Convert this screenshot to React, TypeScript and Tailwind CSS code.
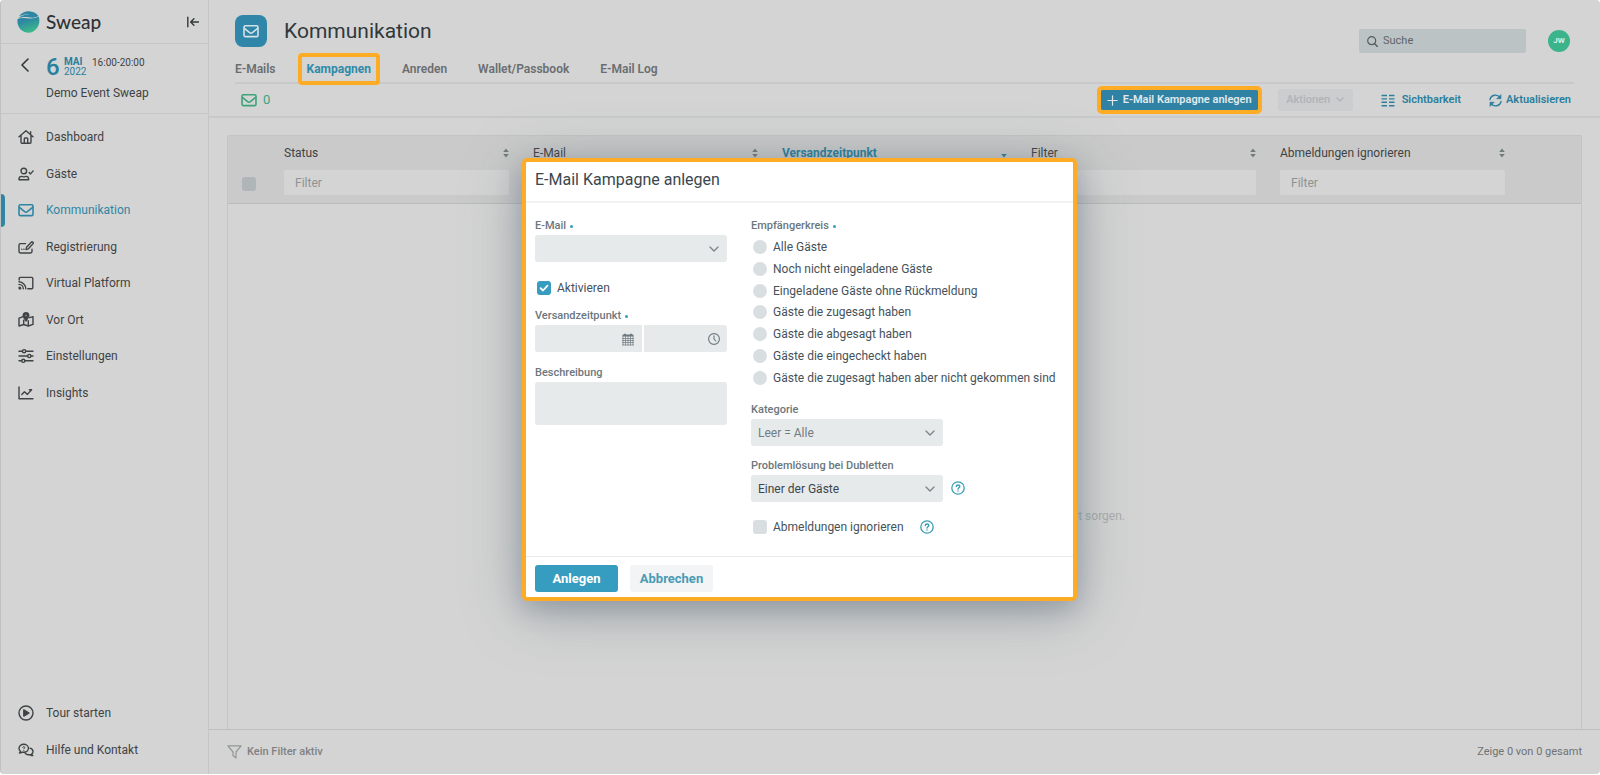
import type { ReactNode } from "react";

type IconProps = { className?: string };

function Svg({ className, children, width = 16, height = 16 }: IconProps & { children: ReactNode; width?: number; height?: number }) {
  return (
    <svg
      className={className}
      width={width}
      height={height}
      viewBox={`0 0 ${width} ${height}`}
      fill="none"
      stroke="currentColor"
      strokeWidth="1.4"
      strokeLinecap="round"
      strokeLinejoin="round"
      aria-hidden="true"
    >
      {children}
    </svg>
  );
}

function MailIcon({ className }: IconProps) {
  return (
    <Svg className={className}>
      <rect x="1" y="2.8" width="14" height="10.8" rx="1.4" strokeWidth="1.6" />
      <path d="M1.4 5.4 6.6 9.6a2.3 2.3 0 0 0 2.8 0l5.2-4.2" strokeWidth="1.6" />
    </Svg>
  );
}

function HomeIcon() {
  return (
    <Svg>
      <path d="M1 7.8 8 1.8l7 6M3 6.6v6.6a1 1 0 0 0 1 1h8a1 1 0 0 0 1-1V6.6" />
      <path d="M6.3 14V9.8c0-.5.3-.8.8-.8h1.8c.5 0 .8.3.8.8V14M12.6 5V2.6" />
    </Svg>
  );
}

function GuestIcon() {
  return (
    <Svg>
      <circle cx="5.8" cy="5" r="2.8" />
      <path d="M1 13.8v-1a2.6 2.6 0 0 1 2.6-2.4c.8 0 1.2.5 2.2.5s1.4-.5 2.2-.5a2.6 2.6 0 0 1 2.6 2.4v1zM11.2 6.6l1.3 1.3 2.7-3" />
    </Svg>
  );
}

function RegisterIcon() {
  return (
    <Svg>
      <path d="M7.6 4.6H2.4A1.4 1.4 0 0 0 1 6v6.6A1.4 1.4 0 0 0 2.4 14h10.2a1.4 1.4 0 0 0 1.4-1.4v-2.4" />
      <path d="m8 10.6.5-2.3 5-5.2c.8-.8 2.4.6 1.6 1.5l-4.9 5.3zM3.8 10.2h.1M5.9 10.2h.1" />
    </Svg>
  );
}

function CastIcon() {
  return (
    <Svg>
      <path d="M1.2 5V3.4c0-.6.4-1 1-1h11.6c.6 0 1 .4 1 1v9.4c0 .6-.4 1-1 1h-4" />
      <path d="M1 6.8a7 7 0 0 1 6.8 7M1 9.4a4.4 4.4 0 0 1 4.3 4.4" />
      <path d="M1.2 12.1c.8 0 1.5.8 1.5 1.6H1.2z" fill="currentColor" />
    </Svg>
  );
}

function MapIcon() {
  return (
    <Svg>
      <path d="M4.6 4.8 1 6.2V14l4.7-1.5 4.6 1.5 4.7-1.6V4.6l-3.4 1M5.7 8.2v4.3M10.3 8.6V14" />
      <path
        d="M8 .2a3.2 3.2 0 0 0-3.2 3.2C4.8 5.4 7 7.2 7.3 9.2h1.4C9 7.2 11.2 5.4 11.2 3.4A3.2 3.2 0 0 0 8 .2Zm0 2.3a.9.9 0 1 1 0 1.8.9.9 0 0 1 0-1.8Z"
        fill="currentColor"
        fillRule="evenodd"
        strokeWidth=".6"
      />
    </Svg>
  );
}

function SlidersIcon() {
  return (
    <Svg>
      <path d="M1 3.2h3.4M7.8 3.2H15M1 8h8.6M13 8h2M1 12.8h2.6M7 12.8h8" />
      <circle cx="6.1" cy="3.2" r="1.6" />
      <circle cx="11.3" cy="8" r="1.6" />
      <circle cx="5.3" cy="12.8" r="1.6" />
    </Svg>
  );
}

function ChartIcon() {
  return (
    <Svg>
      <path d="M1 2v11.8h14M3.8 9.6l2.6-2.8 3 2.6 4.2-4.6M11.4 4.8h2.2" />
    </Svg>
  );
}

function PlayIcon() {
  return (
    <Svg>
      <circle cx="8" cy="8" r="7" />
      <path d="M5.8 4.9v6.2L11 8z" fill="currentColor" />
    </Svg>
  );
}

function HelpChatIcon() {
  return (
    <Svg>
      <path d="M1.4 11c.6-.5.9-1.1 1-1.7A4.2 4.2 0 0 1 1 6.3C1 4 3.1 2.3 5.7 2.3s4.7 1.7 4.7 4-2.1 4-4.7 4c-.6 0-1.1-.1-1.6-.2-.8.6-1.7.9-2.7.9Z" />
      <path d="M12 6.1c1.8.4 3 1.7 3 3.3 0 1-.4 1.9-1.2 2.5.1.7.4 1.3 1 1.7-1.1 0-2-.4-2.7-1-2 .5-4-.1-5-1.5" />
      <path d="M4.7 5.4c.1-1.1 2-1.1 2 0 0 .7-.9.7-.9 1.4M5.8 8.3v.1" strokeWidth="1" />
    </Svg>
  );
}

function CollapseIcon() {
  return (
    <Svg width={12} height={12}>
      <path d="M.8 1.3v9.4M3.8 6h7.7M6.9 2.8 3.7 6l3.2 3.2" />
    </Svg>
  );
}

function ChevronDown({ className }: IconProps) {
  return (
    <Svg width={10} height={6} className={className}>
      <path d="m1 1 4 4 4-4" />
    </Svg>
  );
}

function HelpIcon() {
  return (
    <Svg width={14} height={14}>
      <circle cx="7" cy="7" r="6.2" strokeWidth="1.3" />
      <path d="M5.3 5.5C5.4 3.5 8.8 3.5 8.8 5.5 8.8 6.7 7 6.8 7 8M7 10v.1" strokeWidth="1.5" />
    </Svg>
  );
}

function CalendarIcon() {
  return (
    <Svg width={12} height={13} className="pointer-events-none absolute top-2 right-2 text-[#6b777d]">
      <path d="M.6 2.5h10.8M3 .7v1M9 .7v1" strokeWidth="1.8" strokeLinecap="butt" />
      <path d="M.5 5.5h11M.5 7.5h11M.5 9.5h11M.5 12h11M1 3v9M3.5 3v9M6 3v9M8.5 3v9M11 3v9" strokeWidth=".7" />
    </Svg>
  );
}

function ClockIcon() {
  return (
    <Svg width={12} height={12} className="pointer-events-none absolute top-2 right-[7px] text-[#6b777d]">
      <circle cx="6" cy="6" r="5.4" strokeWidth="1.1" />
      <path d="M6 2.8V6l1.8 2" strokeWidth="1.1" />
    </Svg>
  );
}

function SortIcon({ active }: { active?: boolean }) {
  return (
    <svg width="6" height="10" viewBox="0 0 6 10" className={active ? "text-[#2b7f9c]" : "text-[#6f7b7c]"} fill="currentColor" aria-hidden="true">
      {!active && <path d="M3 .5 5.8 4H.2z" />}
      <path d="M3 9.5.2 6h5.6z" />
    </svg>
  );
}

function Logo() {
  return (
    <svg width="23" height="22" viewBox="0 0 23 22" aria-hidden="true">
      <defs>
        <linearGradient id="ball" x1="0" y1="0" x2=".4" y2="1">
          <stop offset=".3" stopColor="#2d86a3" />
          <stop offset="1" stopColor="#3cb88b" />
        </linearGradient>
      </defs>
      <path d="M.5 8.3C4.500 6.300 9.500 7.400 13.500 7.500c3.300 0 6-.6 8.300-1.900C24.200 13.600 18.800 21.700 11.500 21.700 4.800 21.700-.4 16 .5 8.300Z" fill="url(#ball)" />
      <path d="M2 5.300C4.600 1.900 8.200.2 12 .3c3.900.1 7.500 1.900 9.400 4.800-3.900 2.100-6.400 1.700-9.900 1.200-4-.7-7-.4-10.600 1.200C5.500 3.600 10.500 3.300 15 3.700 10.500 2.600 6.500 3.100 2 5.300Z" fill="#2d86a3" />
    </svg>
  );
}

const navItems = [
  { label: "Dashboard", icon: <HomeIcon /> },
  { label: "Gäste", icon: <GuestIcon /> },
  { label: "Kommunikation", icon: <MailIcon />, active: true },
  { label: "Registrierung", icon: <RegisterIcon /> },
  { label: "Virtual Platform", icon: <CastIcon /> },
  { label: "Vor Ort", icon: <MapIcon /> },
  { label: "Einstellungen", icon: <SlidersIcon /> },
  { label: "Insights", icon: <ChartIcon /> },
];

const supportItems = [
  { label: "Tour starten", icon: <PlayIcon /> },
  { label: "Hilfe und Kontakt", icon: <HelpChatIcon /> },
];

const tabs = ["E-Mails", "Kampagnen", "Anreden", "Wallet/Passbook", "E-Mail Log"];

const columns = ["Status", "E-Mail", "Versandzeitpunkt", "Filter", "Abmeldungen ignorieren"];

const audiences = [
  "Alle Gäste",
  "Noch nicht eingeladene Gäste",
  "Eingeladene Gäste ohne Rückmeldung",
  "Gäste die zugesagt haben",
  "Gäste die abgesagt haben",
  "Gäste die eingecheckt haben",
  "Gäste die zugesagt haben aber nicht gekommen sind",
];

function NavLink({ label, icon, active }: { label: string; icon: ReactNode; active?: boolean }) {
  return (
    <a
      href="#"
      className={
        active
          ? "relative flex items-center gap-3 pl-[17px] text-xs text-[#2f86a3]"
          : "relative flex items-center gap-3 pl-[17px] text-xs text-[#3f4344]"
      }
    >
      {active && <span className="absolute inset-y-[2px] -left-px w-[5px] rounded-r-sm bg-[#2f86a3]" />}
      {icon}
      {label}
    </a>
  );
}

function Sidebar() {
  return (
    <aside className="flex w-[208px] shrink-0 flex-col border-r border-[#c4c6c7]">
      <div className="flex h-11 items-center justify-between border-b border-[#c4c6c7] pr-[9px] pl-4">
        <div className="flex items-center gap-[6px]">
          <Logo />
          <span className="font-['Lato'] text-[19px] leading-6 font-medium text-[#2f3334]">Sweap</span>
        </div>
        <button type="button" aria-label="Menü einklappen" className="text-[#33383a]">
          <CollapseIcon />
        </button>
      </div>

      <div className="flex h-[70px] gap-4 border-b border-[#c4c6c7] pt-[11px] pl-5">
        <button type="button" aria-label="Zurück" className="flex h-5 w-[9px] items-center text-[#33383a]">
          <Svg width={8} height={14}>
            <path d="M7 1 1 7l6 6" strokeWidth="1.6" />
          </Svg>
        </button>
        <div>
          <div className="flex h-6 items-center">
            <span className="w-[18px] text-[24px] leading-6 font-medium text-[#2b7f9c]">6</span>
            <span className="w-7 text-[10px] leading-[10px] text-[#2b7f9c]">
              <b className="block font-bold">MAI</b>
              2022
            </span>
            <span className="self-start text-[10px] leading-4 text-[#3f4344]">16:00-20:00</span>
          </div>
          <p className="mt-[6px] text-xs text-[#3f4344]">Demo Event Sweap</p>
        </div>
      </div>

      <nav className="mt-[5px] grid h-[292px] auto-rows-fr">
        {navItems.map((item) => (
          <NavLink key={item.label} {...item} />
        ))}
      </nav>

      <nav className="mt-auto mb-[6px] grid h-[73px] auto-rows-fr">
        {supportItems.map((item) => (
          <NavLink key={item.label} {...item} />
        ))}
      </nav>
    </aside>
  );
}

function PageHeader() {
  return (
    <header className="border-b-2 border-[#c7c9ca] pr-[26px] pl-[26px]">
      <div className="flex h-[54px] items-center pt-2">
        <span className="flex size-8 items-center justify-center rounded-lg bg-[#2f86a8] text-[#d4e2e7]">
          <MailIcon />
        </span>
        <h1 className="ml-[17px] pt-[2px] text-[21px] text-[#30383c]">Kommunikation</h1>
        <label className="mt-5 ml-auto flex h-6 w-[167px] items-center gap-[5px] rounded-xs bg-[#bcc3c4] px-2 text-[#535c5f]">
          <Svg width={11} height={11}>
            <circle cx="4.7" cy="4.7" r="4" strokeWidth="1.2" />
            <path d="m7.7 7.7 2.7 2.7" />
          </Svg>
          <input type="search" aria-label="Suche" placeholder="Suche" className="min-w-0 flex-1 bg-transparent text-[11px] outline-none placeholder:text-[#5d6567]" />
        </label>
        <button type="button" className="mt-5 mr-1 ml-[22px] size-[22px] rounded-full bg-[#3bb48c] text-[8px] font-bold text-[#d8efe6]">
          JW
        </button>
      </div>

      <nav className="flex h-[30px] items-center gap-[31px] border-b-2 border-[#c7c9ca] pt-[2px] text-xs font-semibold text-[#6a6e70]">
        {tabs.map((tab) =>
          tab === "Kampagnen" ? (
            <a
              key={tab}
              href="#"
              aria-current="page"
              className="relative font-bold text-[#2f8ba9] before:absolute before:-inset-x-[9px] before:-inset-y-2 before:rounded-[4px] before:border-4 before:border-[#feac25]"
            >
              {tab}
            </a>
          ) : (
            <a key={tab} href="#">
              {tab}
            </a>
          ),
        )}
      </nav>

      <div className="flex h-8 items-center">
        <span className="ml-[6px] flex items-center gap-[6px] text-[13px] text-[#3ca37b]">
          <MailIcon />0
        </span>
        <button type="button" className="ml-auto flex h-5 items-center gap-[5px] rounded-[1px] bg-[#2f82a3] px-[6px] text-[11px] font-semibold text-[#e0eaee] outline-4 outline-[#feac25]">
          <Svg width={11} height={11}>
            <path d="M5.5.8v9.4M.8 5.5h9.4" strokeWidth="1.2" />
          </Svg>
          E-Mail Kampagne anlegen
        </button>
        <button type="button" disabled className="ml-5 flex h-[22px] w-[75px] items-center justify-center gap-[6px] rounded-xs bg-[#cbcdcf] text-[11px] font-medium text-[#aeb4b8]">
          Aktionen
          <Svg width={8} height={6}>
            <path d="m1 1 3 3 3-3" strokeWidth="1.2" />
          </Svg>
        </button>
        <button type="button" className="ml-7 flex items-center gap-[7px] text-[11px] font-semibold text-[#2b7f9c]">
          <Svg width={14} height={13}>
            <path d="M.5 1.5h5.5M8 1.5h5.5M.5 4.9h5.5M8 4.9h5.5M.5 8.3h5.5M8 8.3h5.5M.5 11.7h5.5M8 11.7h5.5" strokeLinecap="butt" />
          </Svg>
          Sichtbarkeit
        </button>
        <button type="button" className="mr-[3px] ml-7 flex items-center gap-1 text-[11px] font-semibold text-[#2b7f9c]">
          <Svg width={13} height={13}>
            <path d="M1 5.5a5.5 5.5 0 0 1 10-1.8M12 7.5a5.5 5.5 0 0 1-10 1.8" />
            <path d="M11.9 1v3.7H8.2zM1.1 12V8.3h3.7z" fill="currentColor" strokeWidth=".8" />
          </Svg>
          Aktualisieren
        </button>
      </div>
    </header>
  );
}

function CampaignTable() {
  return (
    <div className="mx-[18px] mt-[17px] flex flex-1 flex-col rounded-t-xs border border-b-0 border-[#c2c4c5]">
      <table className="w-full table-fixed border-b border-[#b9bbbc] bg-[#cacaca] text-xs text-[#3f4344]">
        <colgroup>
          <col className="w-[56px]" />
          <col className="w-[249px]" />
          <col className="w-[249px]" />
          <col className="w-[249px]" />
          <col className="w-[249px]" />
          <col className="w-[249px]" />
          <col />
        </colgroup>
        <thead>
          <tr className="h-[34px]">
            <th />
            {columns.map((column) => {
              const active = column === "Versandzeitpunkt";
              return (
                <th key={column} className="pr-6 font-normal" aria-sort={active ? "descending" : undefined}>
                  <button
                    type="button"
                    className={active ? "flex w-full items-center justify-between font-bold text-[#2b7f9c]" : "flex w-full items-center justify-between"}
                  >
                    {column}
                    <SortIcon active={active} />
                  </button>
                </th>
              );
            })}
            <th />
          </tr>
          <tr className="h-[33px] align-top">
            <td className="pt-[7px] pl-[14px]">
              <input type="checkbox" aria-label="Alle auswählen" className="block size-[14px] appearance-none rounded-[3px] bg-[#b0b5b8]" />
            </td>
            {columns.map((column) => (
              <td key={column} className="pr-6">
                <input
                  type="text"
                  aria-label={`${column} filtern`}
                  placeholder="Filter"
                  className="block h-[25px] w-full rounded-xs bg-[#d4d4d4] px-[11px] outline-none placeholder:text-[#8d9394]"
                />
              </td>
            ))}
            <td />
          </tr>
        </thead>
      </table>
      <p className="mt-[304px] pr-[456px] text-right text-xs text-[#a9adae]">t sorgen.</p>
    </div>
  );
}

function FieldLabel({ htmlFor, children, required }: { htmlFor?: string; children: ReactNode; required?: boolean }) {
  return (
    <label htmlFor={htmlFor} className="flex h-4 items-center gap-1 text-[11px] font-medium text-[#6b777d]">
      {children}
      {required && <span className="size-[3px] rounded-full bg-[#369dc0]" />}
    </label>
  );
}

function SelectBox({ id, value, muted }: { id: string; value: string; muted?: boolean }) {
  return (
    <div className="relative mt-px w-48">
      <select
        id={id}
        className={
          muted
            ? "block h-[27px] w-full appearance-none rounded-[3px] bg-[#e6eaeb] px-[7px] text-xs text-[#727d82]"
            : "block h-[27px] w-full appearance-none rounded-[3px] bg-[#e6eaeb] px-[7px] text-xs text-[#3c464b]"
        }
      >
        <option>{value}</option>
      </select>
      <ChevronDown className="pointer-events-none absolute top-[11px] right-2 text-[#7b878c]" />
    </div>
  );
}

function CampaignDialog() {
  return (
    <form
      role="dialog"
      aria-labelledby="dialog-title"
      className="w-[555px] self-start rounded-[5px] border-4 border-[#feac25] bg-white text-[#46525a] shadow-[0_10px_60px_rgba(80,100,105,0.4),0_8px_24px_rgba(75,90,120,0.3)]"
    >
      <h2 id="dialog-title" className="h-[41px] border-b-2 border-[#f1f2f3] pl-[9px] text-[16px] leading-9 text-[#3b474e]">
        E-Mail Kampagne anlegen
      </h2>

      <div className="flex gap-6 px-[9px] pt-[15px] pb-[19px]">
        <div className="w-48">
          <FieldLabel htmlFor="mail" required>
            E-Mail
          </FieldLabel>
          <SelectBox id="mail" value="" />
          <label className="mt-4 ml-[2px] flex h-5 items-center gap-[6px] text-xs">
            <span className="relative size-[14px]">
              <input type="checkbox" defaultChecked className="block size-[14px] appearance-none rounded-[3px] bg-[#369dc0]" />
              <Svg width={14} height={14} className="pointer-events-none absolute inset-0 text-white">
                <path d="m3.6 7.2 2.4 2.3 4.5-4.8" strokeWidth="1.8" />
              </Svg>
            </span>
            Aktivieren
          </label>
          <div className="mt-[10px]">
            <FieldLabel htmlFor="date" required>
              Versandzeitpunkt
            </FieldLabel>
          </div>
          <div className="mt-px flex gap-[2px]">
            <div className="relative w-[107px]">
              <input id="date" type="text" className="block h-[27px] w-full rounded-l-[3px] bg-[#e6eaeb] px-2 text-xs" />
              <CalendarIcon />
            </div>
            <div className="relative flex-1">
              <input type="text" aria-label="Uhrzeit" className="block h-[27px] w-full rounded-r-[3px] bg-[#e6eaeb] px-2 text-xs" />
              <ClockIcon />
            </div>
          </div>
          <div className="mt-[13px]">
            <FieldLabel htmlFor="description">Beschreibung</FieldLabel>
          </div>
          <textarea id="description" className="mt-px block h-[43px] w-full resize-none rounded-[3px] bg-[#e6eaeb] p-2 text-xs" />
        </div>

        <div className="flex-1">
          <fieldset>
            <legend>
              <FieldLabel required>Empfängerkreis</FieldLabel>
            </legend>
            <div className="mt-[2px] grid h-[153px] auto-rows-fr">
              {audiences.map((audience) => (
                <label key={audience} className="ml-[2px] flex items-center gap-[6px] text-xs whitespace-nowrap">
                  <input type="radio" name="audience" className="size-[14px] appearance-none rounded-full bg-[#d9dfe1] checked:bg-[#369dc0]" />
                  {audience}
                </label>
              ))}
            </div>
          </fieldset>

          <div className="mt-[13px]">
            <FieldLabel htmlFor="category">Kategorie</FieldLabel>
            <SelectBox id="category" value="Leer = Alle" muted />
          </div>

          <div className="mt-3">
            <FieldLabel htmlFor="duplicates">Problemlösung bei Dubletten</FieldLabel>
            <div className="flex items-center gap-2">
              <SelectBox id="duplicates" value="Einer der Gäste" />
              <button type="button" aria-label="Hilfe zu Dubletten" className="text-[#3b9fb5]">
                <HelpIcon />
              </button>
            </div>
          </div>

          <div className="mt-[15px] ml-[2px] flex h-5 items-center gap-4">
            <label className="flex items-center gap-[6px] text-xs">
              <input type="checkbox" className="size-[14px] appearance-none rounded-[3px] bg-[#d9dfe1] checked:bg-[#369dc0]" />
              Abmeldungen ignorieren
            </label>
            <button type="button" aria-label="Hilfe zu Abmeldungen" className="text-[#3b9fb5]">
              <HelpIcon />
            </button>
          </div>
        </div>
      </div>

      <div className="flex gap-3 border-t border-[#e9ebec] px-[9px] pt-2 pb-[5px]">
        <button type="submit" className="h-[27px] w-[83px] rounded-[3px] bg-[#369dc0] text-[13px] font-bold text-white">
          Anlegen
        </button>
        <button type="button" className="h-[27px] w-[83px] rounded-[3px] bg-[#f2f4f5] text-[13px] font-bold text-[#4a9cb5]">
          Abbrechen
        </button>
      </div>
    </form>
  );
}

export default function App() {
  return (
    <div className="h-screen overflow-hidden bg-white pb-px font-['Roboto',sans-serif]">
      <div className="relative flex h-full overflow-hidden rounded-[4px] border-l border-[#bfc1c2] bg-[#d4d4d4]">
        <Sidebar />
        <div className="flex min-w-0 flex-1 flex-col">
          <PageHeader />
          <CampaignTable />
          <footer className="flex h-[45px] items-center justify-between border-t border-[#bfbfbf] px-[18px] text-[11px] text-[#6f7375]">
            <span className="flex items-center gap-[5px] font-medium text-[#7e8283]">
              <Svg width={15} height={14} className="text-[#929697]">
                <path d="M.9.9h13.2L9 7v6L6 10.5V7z" strokeWidth="1.2" />
              </Svg>
              Kein Filter aktiv
            </span>
            <span>Zeige 0 von 0 gesamt</span>
          </footer>
        </div>

        <div className="absolute inset-0 flex justify-center pt-[158px] pr-[2px]">
          <CampaignDialog />
        </div>
      </div>
    </div>
  );
}
